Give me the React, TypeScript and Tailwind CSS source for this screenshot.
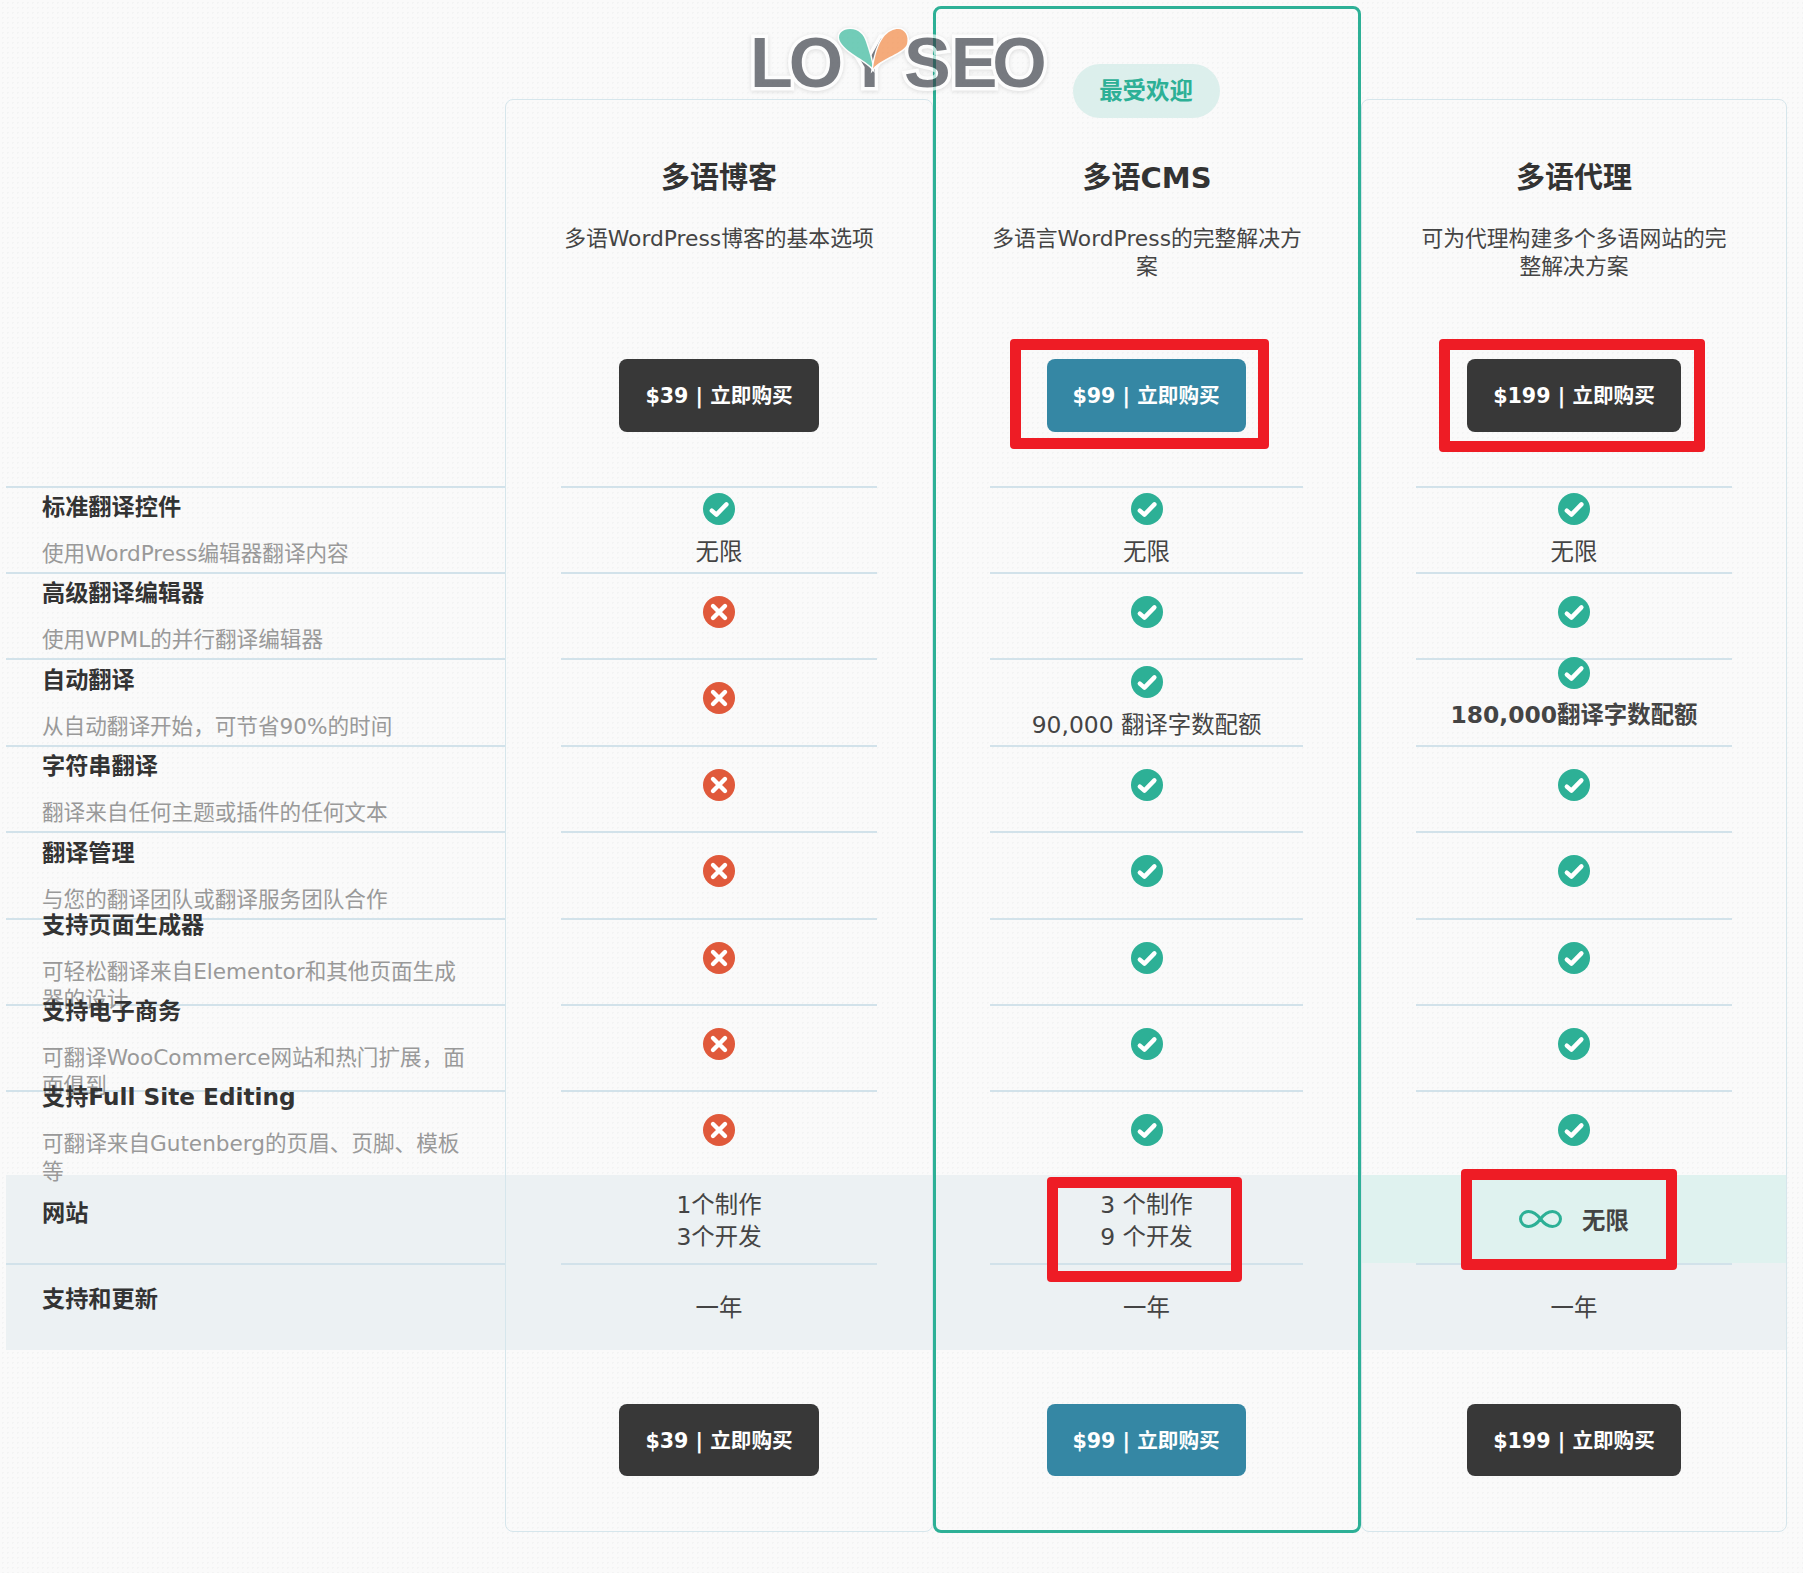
const features = [
  { title: "标准翻译控件", sub: "使用WordPress编辑器翻译内容", h: "h-[86px]" },
  { title: "高级翻译编辑器", sub: "使用WPML的并行翻译编辑器", h: "h-[86px]" },
  { title: "自动翻译", sub: "从自动翻译开始，可节省90%的时间", h: "h-[87px]" },
  { title: "字符串翻译", sub: "翻译来自任何主题或插件的任何文本", h: "h-[86px]" },
  { title: "翻译管理", sub: "与您的翻译团队或翻译服务团队合作", h: "h-[87px]" },
  { title: "支持页面生成器", sub: "可轻松翻译来自Elementor和其他页面生成器的设计", h: "h-[86px]" },
  { title: "支持电子商务", sub: "可翻译WooCommerce网站和热门扩展，面面俱到", h: "h-[86px]" },
  { title: "支持Full Site Editing", sub: "可翻译来自Gutenberg的页眉、页脚、模板等", h: "h-[85px]" },
];

const redBoxes = [
  "left-[1010px] top-[339px] w-[259px] h-[110px]",
  "left-[1439px] top-[339px] w-[266px] h-[113px]",
  "left-[1047px] top-[1177px] w-[195px] h-[105px]",
  "left-[1461px] top-[1169px] w-[216px] h-[101px]",
];

function Check({ className = "" }: { className?: string }) {
  return (
    <svg width="32" height="32" viewBox="0 0 32 32" className={`shrink-0 ${className}`}>
      <circle cx="16" cy="16" r="16" fill="#2db096" />
      <path d="M8.8 17.6 L13.4 21.6 L23.4 11.4" fill="none" stroke="#fff" strokeWidth="4.4" strokeLinecap="round" strokeLinejoin="round" />
    </svg>
  );
}

function Cross() {
  return (
    <svg width="32" height="32" viewBox="0 0 32 32" className="shrink-0">
      <circle cx="16" cy="16" r="16" fill="#e0593b" />
      <path d="M10 10 L22 22 M22 10 L10 22" fill="none" stroke="#fff" strokeWidth="4.4" strokeLinecap="round" />
    </svg>
  );
}

function Infinity8() {
  return (
    <svg width="43" height="18" viewBox="0 0 43 18" className="shrink-0">
      <path
        d="M21.5 9 C17 3 13 1.5 9.5 1.5 C5 1.5 1.5 5 1.5 9 C1.5 13 5 16.5 9.5 16.5 C13 16.5 17 15 21.5 9 C26 3 30 1.5 33.5 1.5 C38 1.5 41.5 5 41.5 9 C41.5 13 38 16.5 33.5 16.5 C30 16.5 26 15 21.5 9Z"
        fill="none"
        stroke="#2db096"
        strokeWidth="3"
      />
    </svg>
  );
}

function Logo() {
  return (
    <div className="absolute left-[750px] top-[20px] h-[90px] w-[310px] opacity-[.67] [filter:drop-shadow(0_1px_2px_rgba(0,0,0,.18))]">
      <div className="mt-[3px] flex font-['Liberation_Sans',sans-serif] text-[70px] font-bold leading-[80px] text-[#383c45] [-webkit-text-stroke:7px_#fff] [paint-order:stroke_fill]">
        <span>L</span>
        <span className="-ml-[4px]">O</span>
        <span className="ml-[3px]">Y</span>
        <span className="ml-[11px]">S</span>
        <span>E</span>
        <span className="-ml-[5px]">O</span>
      </div>
      <svg width="150" height="90" viewBox="0 0 150 90" className="absolute left-[70px] top-0">
        <path d="M52.7 48.3 C46 40 24 32 19.5 20 C17.5 13 23 9 30 9 C39 9 44 15 46 22 C49 31 52 40 52.7 48.3Z" fill="#31b799" stroke="#fff" strokeWidth="3" paintOrder="stroke" />
        <path d="M53 48.5 C55 35 58 25 63 18 C68 11 74 9 78 9 C85 9 89 16 87 24 C84 33 62 38 53 48.5Z" fill="#f3853d" stroke="#fff" strokeWidth="3" paintOrder="stroke" />
      </svg>
    </div>
  );
}

function PlanHead({ name, desc, price, width, featured }: { name: string; desc: string; price: string; width: string; featured?: boolean }) {
  return (
    <div className={featured ? "flex h-[477px] flex-col items-center" : "flex h-[386px] flex-col items-center"}>
      {featured ? (
        <div className="mt-[55px] mr-[2px] flex h-[54px] w-[147px] items-center justify-center rounded-full bg-[#dcefec] pt-[2px] text-[23.4px] font-bold text-[#2db096]">
          最受欢迎
        </div>
      ) : null}
      <h2 className={featured ? "mt-[42px] text-[29px] font-bold leading-[36px] text-[#333]" : "mt-[60px] text-[29px] font-bold leading-[36px] text-[#333]"}>
        {name}
      </h2>
      <p className="mt-[29px] h-[56px] w-[316px] text-center text-[21.8px] leading-[27.6px] text-[#444]">{desc}</p>
      <BuyButton price={price} width={width} featured={featured} className={featured ? "mt-[78px] mr-[2px] h-[73px]" : "mt-[78px] h-[73px]"} />
    </div>
  );
}

function BuyButton({ price, width, featured, className = "h-[72px]" }: { price: string; width: string; featured?: boolean; className?: string }) {
  return (
    <button
      className={`flex items-center justify-center rounded-[8px] pt-[2px] text-[20.6px] font-bold text-white ${width} ${featured ? "bg-[#3587a4]" : "bg-[#383838]"} ${className}`}
    >
      {price} | 立即购买
    </button>
  );
}

function Cell({ h, line = true, mx, bg = "", children }: { h: string; line?: boolean; mx: string; bg?: string; children: React.ReactNode }) {
  return (
    <div className={`${h} ${bg}`}>
      <div className={`flex h-full flex-col items-center ${mx} ${line ? "border-t-2 border-[#d2e2ea]" : ""}`}>{children}</div>
    </div>
  );
}

function Value({ children, bold }: { children: React.ReactNode; bold?: boolean }) {
  return <div className={bold ? "whitespace-nowrap text-center text-[23.4px] font-bold leading-[32px] text-[#444]" : "whitespace-nowrap text-center text-[23.4px] leading-[32px] text-[#444]"}>{children}</div>;
}

function IconRows({ mx, crosses, third }: { mx: string; crosses?: boolean; third?: React.ReactNode }) {
  return (
    <>
      <Cell h="h-[86px]" mx={mx}>
        <Check className="mt-[5px]" />
        <div className="mt-[11px]">
          <Value>无限</Value>
        </div>
      </Cell>
      {features.slice(1).map((f, i) => (
        <Cell key={f.title} h={f.h} mx={mx}>
          {i === 1 && third ? (
            third
          ) : (
            <div className="mt-[22px]">{crosses ? <Cross /> : <Check />}</div>
          )}
        </Cell>
      ))}
    </>
  );
}

function Support({ mx }: { mx: string }) {
  return (
    <Cell h="h-[87px]" mx={mx} bg="bg-[#ecf1f3]">
      <div className="mt-[27px]">
        <Value>一年</Value>
      </div>
    </Cell>
  );
}

export default function App() {
  return (
    <div className="relative h-[1573px] w-[1803px] overflow-hidden bg-[#fafafa] bg-[radial-gradient(#f3f4f4_1px,transparent_1px)] bg-[size:5px_5px] pl-[6px] font-['DejaVu_Sans','Noto_Sans_CJK_SC',sans-serif]">
      <div className="flex items-start">
        {/* feature names */}
        <div className="w-[499px] pt-[486px]">
          {features.map((f) => (
            <div key={f.title} className={`flex flex-col justify-center border-t-2 border-[#d2e2ea] pl-[36px] pr-[38px] pt-[1px] ${f.h}`}>
              <div className="text-[23.2px] font-bold leading-[28px] text-[#333]">{f.title}</div>
              <div className="mt-[19px] text-[21.6px] leading-[27.6px] text-[#999]">{f.sub}</div>
            </div>
          ))}
          <div className="h-[88px] bg-[#ecf1f3] pl-[36px] pt-[24px] text-[23.2px] font-bold leading-[28px] text-[#333]">网站</div>
          <div className="h-[87px] bg-[#ecf1f3]">
            <div className="h-full border-t-2 border-[#d2e2ea] pl-[36px] pt-[20px] text-[23.2px] font-bold leading-[28px] text-[#333]">支持和更新</div>
          </div>
        </div>

        {/* blog plan */}
        <div className="mt-[99px] h-[1433px] w-[428px] rounded-[8px] border border-[#d6e6ec]">
          <PlanHead name="多语博客" desc="多语WordPress博客的基本选项" price="$39" width="w-[200px]" />
          <IconRows mx="mx-[55px]" crosses />
          <Cell h="h-[88px]" line={false} mx="mx-[55px]" bg="bg-[#ecf1f3]">
            <div className="mt-[14px]">
              <Value>
                1个制作
                <br />
                3个开发
              </Value>
            </div>
          </Cell>
          <Support mx="mx-[55px]" />
          <div className="flex justify-center pt-[54px]">
            <BuyButton price="$39" width="w-[200px]" />
          </div>
        </div>

        {/* cms plan */}
        <div className="mt-[6px] h-[1527px] w-[428px] rounded-[8px] border-[3px] border-[#2db096]">
          <PlanHead name="多语CMS" desc="多语言WordPress的完整解决方案" price="$99" width="w-[199px]" featured />
          <IconRows
            mx="ml-[54px] mr-[55px]"
            third={
              <>
                <Check className="mt-[6px]" />
                <div className="mt-[11px]">
                  <Value>90,000 翻译字数配额</Value>
                </div>
              </>
            }
          />
          <Cell h="h-[88px]" line={false} mx="ml-[54px] mr-[55px]" bg="bg-[#ecf1f3]">
            <div className="mt-[14px]">
              <Value>
                3 个制作
                <br />9 个开发
              </Value>
            </div>
          </Cell>
          <Support mx="ml-[54px] mr-[55px]" />
          <div className="flex justify-center pt-[54px] pr-[2px]">
            <BuyButton price="$99" width="w-[199px]" featured />
          </div>
        </div>

        {/* agency plan */}
        <div className="mt-[99px] h-[1433px] w-[426px] rounded-[8px] border border-[#d6e6ec]">
          <PlanHead name="多语代理" desc="可为代理构建多个多语网站的完整解决方案" price="$199" width="w-[214px]" />
          <IconRows
            mx="mx-[54px]"
            third={
              <>
                <Check className="-mt-[3px]" />
                <div className="mt-[10px]">
                  <Value bold>180,000翻译字数配额</Value>
                </div>
              </>
            }
          />
          <div className="flex h-[88px] items-center justify-center gap-[20px] bg-[#dff2ef]">
            <Infinity8 />
            <span className="mt-[6px] text-[23.4px] font-bold text-[#444]">无限</span>
          </div>
          <Support mx="mx-[54px]" />
          <div className="flex justify-center pt-[54px]">
            <BuyButton price="$199" width="w-[214px]" />
          </div>
        </div>
      </div>

      <Logo />

      {/* red annotation boxes */}
      {redBoxes.map((b) => (
        <div key={b} className={`absolute rounded-[4px] border-[11px] border-[#ee1c25] ${b}`} />
      ))}
    </div>
  );
}
